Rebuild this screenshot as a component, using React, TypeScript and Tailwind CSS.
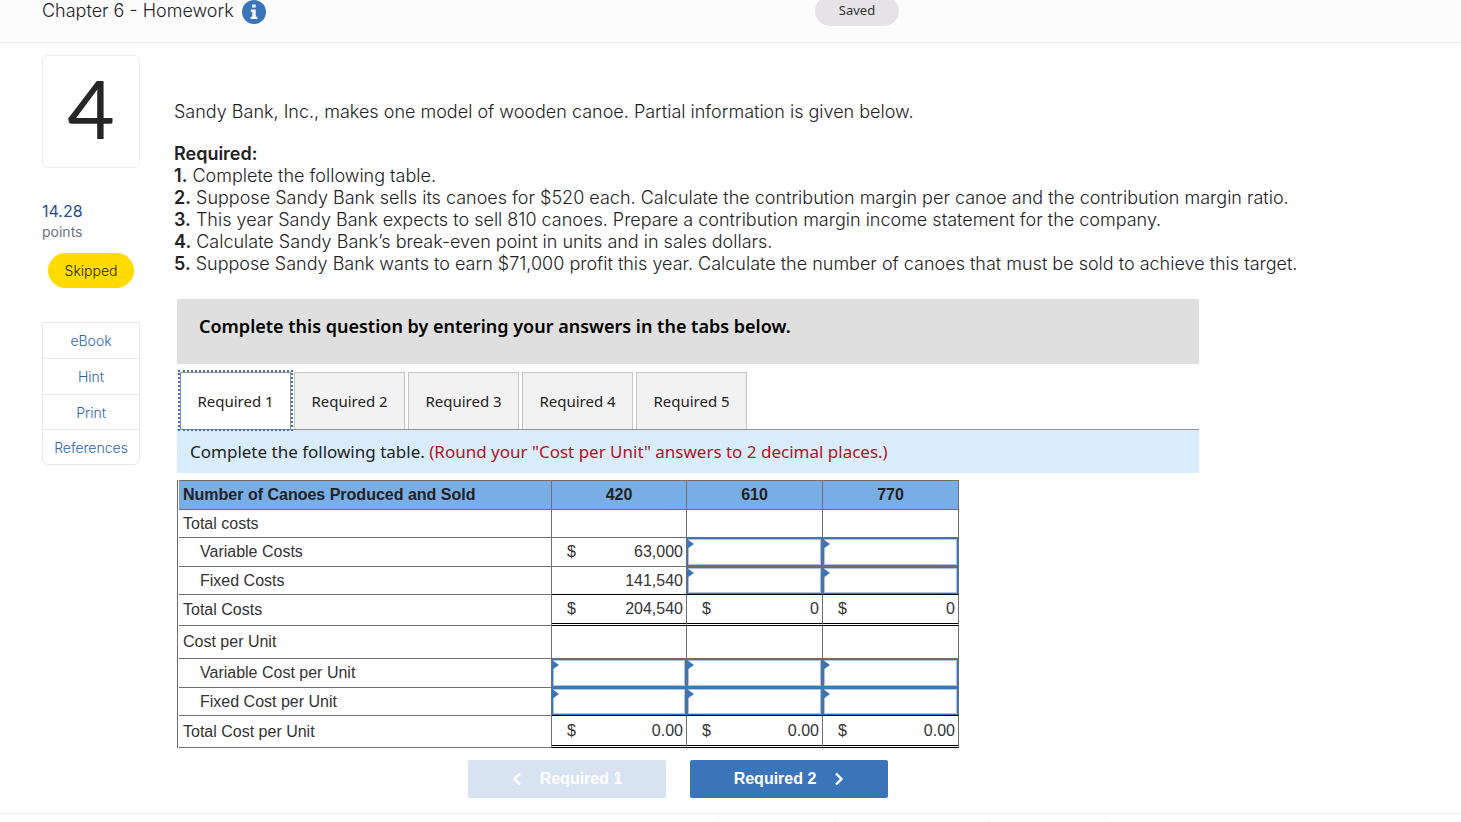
import { useState } from "react";
import clsx from "clsx";

const tabs = ["Required 1", "Required 2", "Required 3", "Required 4", "Required 5"];

const steps = [
  "Complete the following table.",
  "Suppose Sandy Bank sells its canoes for $520 each. Calculate the contribution margin per canoe and the contribution margin ratio.",
  "This year Sandy Bank expects to sell 810 canoes. Prepare a contribution margin income statement for the company.",
  "Calculate Sandy Bank’s break-even point in units and in sales dollars.",
  "Suppose Sandy Bank wants to earn $71,000 profit this year. Calculate the number of canoes that must be sold to achieve this target.",
];

const resources = [
  { label: "eBook", height: "h-9" },
  { label: "Hint", height: "h-9" },
  { label: "Print", height: "h-[35px]" },
  { label: "References", height: "h-[34px]" },
];

type Cell = { kind: "blank" } | { kind: "input" } | { kind: "value"; value: string; dollar?: boolean };

interface Row {
  label: string;
  height: string;
  indent?: boolean;
  // rule drawn under the amount columns
  rule?: "single" | "double";
  cells: Cell[];
}

const blank: Cell = { kind: "blank" };
const input: Cell = { kind: "input" };
const value = (v: string, dollar = true): Cell => ({ kind: "value", value: v, dollar });

const columns = ["420", "610", "770"];

const rows: Row[] = [
  { label: "Total costs", height: "h-7", cells: [blank, blank, blank] },
  { label: "Variable Costs", height: "h-[29px]", indent: true, cells: [value("63,000"), input, input] },
  { label: "Fixed Costs", height: "h-7", indent: true, rule: "single", cells: [value("141,540", false), input, input] },
  { label: "Total Costs", height: "h-[31px]", rule: "double", cells: [value("204,540"), value("0"), value("0")] },
  { label: "Cost per Unit", height: "h-[33px]", cells: [blank, blank, blank] },
  { label: "Variable Cost per Unit", height: "h-[29px]", indent: true, cells: [input, input, input] },
  { label: "Fixed Cost per Unit", height: "h-7", indent: true, rule: "single", cells: [input, input, input] },
  { label: "Total Cost per Unit", height: "h-8", rule: "double", cells: [value("0.00"), value("0.00"), value("0.00")] },
];

function InfoIcon() {
  return (
    <svg viewBox="0 0 24 24" className="block w-6 h-6" aria-hidden="true">
      <circle cx="12" cy="12" r="12" fill="#3a75b9" />
      <path d="M10.2 4.6h3.4v3h-3.4zM8.8 9.6h4.9v7.2h1.6v2.2H8.7v-2.2h1.7v-5H8.8z" fill="#fff" />
    </svg>
  );
}

function Header() {
  return (
    <header className="flex items-start h-[43px] px-[42px] bg-[#fcfcfc] border-b border-[#eeeeee]">
      <div className="flex-[773] flex items-start gap-2">
        <h1 className="text-lg leading-[22px] font-light text-[#222]">Chapter 6 - Homework</h1>
        <button type="button" aria-label="Assignment information" className="rounded-full">
          <InfoIcon />
        </button>
      </div>
      <div className="-mt-1 w-[84px] h-[30px] flex items-center justify-center rounded-full bg-[#e5e3e6] font-['Noto_Sans',sans-serif] text-[13px] text-[#333]">
        Saved
      </div>
      <div className="flex-[520]" />
    </header>
  );
}

function Sidebar() {
  return (
    <aside className="w-[98px] shrink-0 pt-3">
      <div className="h-[113px] pb-[10px] flex items-center justify-center rounded-md border border-[#eeeeee] font-['Lato',sans-serif] text-[82px] leading-none text-[#262626]">
        4
      </div>
      <div className="mt-8 leading-5">
        <div className="text-[#1f4e8c] text-base leading-[22px]">14.28</div>
        <div className="text-[14px] text-[#6b7480]">points</div>
      </div>
      <div className="mt-[11px] mx-auto w-[86px] h-[35px] flex items-center justify-center rounded-full bg-[#ffdb00] text-[14px] font-light text-[#222]">
        Skipped
      </div>
      <nav className="mt-[34px] rounded-b-md border border-[#e8e8e8] divide-y divide-[#e8e8e8] text-[14px] font-light">
        {resources.map((r) => (
          <a key={r.label} href="#" className={clsx("flex items-center justify-center text-[#2a65ab]", r.height)}>
            {r.label}
          </a>
        ))}
      </nav>
    </aside>
  );
}

function TabBar({ active, onChange }: { active: number; onChange: (i: number) => void }) {
  return (
    <div role="tablist" className="mt-2 pl-[3px] flex gap-[3px] border-b border-[#8f9194]">
      {tabs.map((tab, i) => (
        <button
          key={tab}
          type="button"
          role="tab"
          aria-selected={i === active}
          onClick={() => onChange(i)}
          className={clsx(
            "w-[111px] h-[57px] border border-b-0 text-[15px] text-[#222]",
            i === active
              ? "bg-white border-[#8f9194] relative z-10 outline-2 outline-dotted outline-[#3a75b9]"
              : "bg-[#f2f2f2] border-[#c4c4c4]",
          )}
        >
          {tab}
        </button>
      ))}
    </div>
  );
}

function AnswerInput({ label }: { label: string }) {
  return (
    <div className="relative h-full">
      <input
        type="text"
        aria-label={label}
        className="block w-full h-full px-1 border border-[#3a75b9] bg-white text-right outline-none shadow-[inset_0_0_0_1px_#a9c4e6]"
      />
      <svg viewBox="0 0 7 10" className="absolute left-0 top-px w-[7px] h-[10px]" aria-hidden="true">
        <path d="M0 0 L7 5 L0 10 Z" fill="#3a75b9" />
      </svg>
    </div>
  );
}

function AmountCell({ cell, label, rule }: { cell: Cell; label: string; rule?: Row["rule"] }) {
  return (
    <td
      className={clsx(
        "h-[inherit] p-0 border-r border-r-[#6f6f6f]",
        !rule && "border-b border-b-[#6f6f6f]",
        rule === "single" && "border-b border-b-black",
        rule === "double" && "border-b-3 border-double border-b-black",
      )}
    >
      {cell.kind === "input" && <AnswerInput label={label} />}
      {cell.kind === "value" && (
        <div className="flex justify-between pl-[15px] pr-[3px] leading-5">
          <span>{cell.dollar ? "$" : ""}</span>
          <span>{cell.value}</span>
        </div>
      )}
    </td>
  );
}

function CostTable() {
  return (
    <div className="mt-[7px] max-w-[782px] pl-px border-l border-[#6f6f6f]">
      <table className="w-full table-fixed border-separate border-spacing-0 border-t border-[#6f6f6f] font-['Liberation_Sans',Arial,sans-serif] text-base leading-5 text-[#333]">
        <colgroup>
          <col />
          <col className="w-[135px]" />
          <col className="w-[136px]" />
          <col className="w-[136px]" />
        </colgroup>
        <thead>
          <tr className="h-[29px] bg-[#79ade6] text-[#222]">
            <th scope="col" className="p-0 pl-1 text-left border-r border-b border-[#6f6f6f]">
              Number of Canoes Produced and Sold
            </th>
            {columns.map((c) => (
              <th key={c} scope="col" className="p-0 border-r border-b border-[#6f6f6f]">
                {c}
              </th>
            ))}
          </tr>
        </thead>
        <tbody>
          {rows.map((row) => (
            <tr key={row.label} className={row.height}>
              <th
                scope="row"
                className={clsx(
                  "p-0 text-left font-normal border-r border-b border-[#6f6f6f]",
                  row.indent ? "pl-[21px]" : "pl-1",
                )}
              >
                {row.label}
              </th>
              {row.cells.map((cell, i) => (
                <AmountCell key={columns[i]} cell={cell} label={`${row.label}, ${columns[i]} canoes`} rule={row.rule} />
              ))}
            </tr>
          ))}
        </tbody>
      </table>
    </div>
  );
}

function StepButtons() {
  return (
    <div className="mt-3 ml-[291px] flex gap-6 font-['Liberation_Sans',Arial,sans-serif] text-base font-bold text-white">
      <button type="button" disabled className="w-[198px] h-[38px] flex items-center justify-center gap-[18px] rounded-xs bg-[#d8e3f1]">
        <svg viewBox="0 0 10 14" className="w-[10px] h-[14px]" fill="none" stroke="currentColor" strokeWidth="2.4" aria-hidden="true">
          <path d="M8 1.5 2.5 7 8 12.5" />
        </svg>
        Required 1
      </button>
      <button type="button" className="w-[198px] h-[38px] flex items-center justify-center gap-[18px] rounded-xs bg-[#3a75b9]">
        Required 2
        <svg viewBox="0 0 10 14" className="w-[10px] h-[14px]" fill="none" stroke="currentColor" strokeWidth="2.4" aria-hidden="true">
          <path d="M2 1.5 7.5 7 2 12.5" />
        </svg>
      </button>
    </div>
  );
}

export default function App() {
  const [active, setActive] = useState(0);

  return (
    <div className="bg-white font-['Inter',sans-serif] text-[#333]">
      <Header />
      <main className="flex px-[42px]">
        <Sidebar />
        <section className="flex-1 min-w-0 pl-[34px] pt-[58px]">
          <div className="text-lg leading-[22px] font-light text-[#222]">
            <p>Sandy Bank, Inc., makes one model of wooden canoe. Partial information is given below.</p>
            <p className="mt-5 font-semibold">Required:</p>
            {steps.map((step, i) => (
              <p key={step}>
                <b className="font-semibold">{i + 1}.</b> {step}
              </p>
            ))}
          </div>

          <div className="mt-6 ml-[3px] max-w-[1022px] font-['Noto_Sans',Verdana,sans-serif]">
            <div className="h-[65px] px-[22px] pt-[15px] bg-[#dfdfdf] text-lg leading-6 font-semibold text-black">
              Complete this question by entering your answers in the tabs below.
            </div>
            <TabBar active={active} onChange={setActive} />
            <div role="tabpanel">
              <p className="px-[13px] py-[10px] bg-[#d9ecfb] text-[17px] leading-[23px] text-[#222]">
                Complete the following table.{" "}
                <span className="text-[#b5121b]">(Round your "Cost per Unit" answers to 2 decimal places.)</span>
              </p>
              <CostTable />
              <StepButtons />
            </div>
          </div>
        </section>
      </main>
      <footer className="mt-[15px] pt-[6px] border-t border-[#f0f0f0]">
        <div className="flex justify-center pl-[362px] h-[2px]">
          <div className="w-[116px] border-l border-[#eeeeee]" />
          <div className="w-[155px] border-l border-[#eeeeee]" />
          <div className="w-[117px] border-x border-[#eeeeee]" />
        </div>
      </footer>
    </div>
  );
}
